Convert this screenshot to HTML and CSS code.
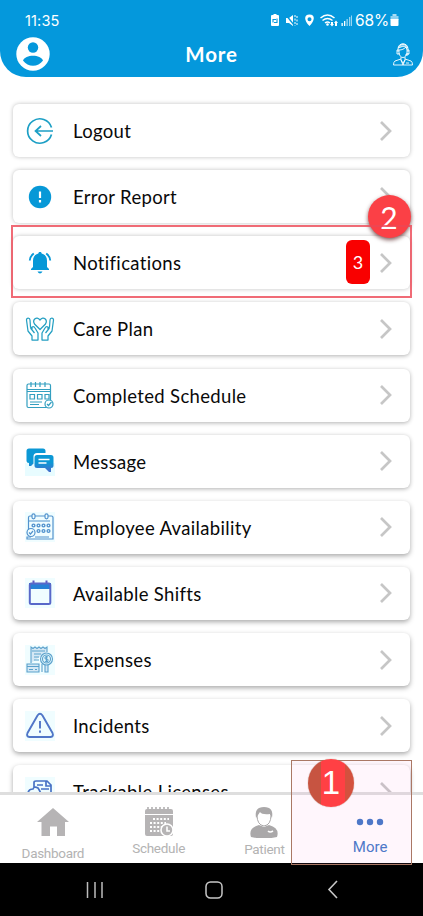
FILE: index.html
```html
<!DOCTYPE html>
<html lang="en">
<head>
<meta charset="utf-8">
<title>More</title>
<link rel="stylesheet" href="styles.css">
</head>
<body>
<svg class="defs" width="0" height="0"><defs>
<linearGradient id="blend" gradientUnits="userSpaceOnUse" x1="0" y1="0" x2="0" y2="30"><stop offset=".55" stop-color="#0c98d5"/><stop offset="1" stop-color="#625bc7"/></linearGradient>
<symbol id="chevron" viewBox="0 0 14 22"><path d="M2 2l9 9-9 9" fill="none" stroke="#c6c6c6" stroke-width="2.7"/></symbol>
</defs></svg>
<div class="screen">
<header class="header">
  <div class="status">
    <span class="time">11:35</span>
    <div class="status-icons">
      <svg width="85" height="16" viewBox="0 0 85 16" fill="#fff">
        <path d="M3 2h1.500V1h3v1H9q1 0 1 1v9q0 1-1 1H3q-1 0-1-1V3q0-1 1-1z"/><path d="M4 9.500V6.500h3M5 9.500h3V5.500" fill="none" stroke="#0498dc" stroke-width="1.100"/>
        <path d="M17 5h3l4-3v11l-4-3h-3z"/><path d="M17 2l8 10" stroke="#0498dc" stroke-width="1.300"/><path d="M26 2v11M28 3v10" stroke="#fff" stroke-dasharray="2 1.500"/>
        <path fill-rule="evenodd" d="M40.500 1.500c-6 0-5.500 6 0 11.500 5.500-5.500 6-11.500 0-11.500zm0 2.700a2 2 0 1 1 0 4 2 2 0 0 1 0-4z"/>
        <g fill="none" stroke="#fff" stroke-width="1.500"><path d="M51.500 5q7-6 14 0M53.500 7.500q5-4 10 0M56 10q2.500-2 5 0"/></g><circle cx="58.500" cy="11.500" r="1.300"/>
        <path d="M62 9h2v2h1l-2 2.500L61 11h1zM66 13v-3h-1l2-2.500L69 10h-1v3z"/>
        <path d="M72.500 10h1.300v3h-1.300zM75 8h1.300v5H75z"/><path opacity=".6" d="M77.500 6h1.300v7h-1.300zM80 4h1.300v9H80zM82 2.500h1v10.500h-1z"/>
      </svg>
      <span class="percent">68%</span>
      <svg width="9" height="13" viewBox="0 0 9 13"><path d="M2.500 0h4v2h-4z" fill="#a9dcf4"/><path d="M.500 2h8v4h-8z" fill="#8bd0f1"/><path d="M.500 5h8v6q0 1-1 1h-6q-1 0-1-1z" fill="#fff"/></svg>
    </div>
  </div>
  <div class="title-row">
    <svg width="34" height="34" viewBox="0 0 34 34"><circle cx="17" cy="17" r="16.700" fill="#fff"/><circle cx="17" cy="10.500" r="5.200" fill="#0498dc"/><path d="M7 23.500c2-6.500 18-6.500 20 0-5 7-15 7-20 0z" fill="#0498dc"/></svg>
    <h1>More</h1>
    <svg width="20" height="23" viewBox="0 0 20 23" fill="none" stroke="#fff" stroke-width=".9"><path d="M5 9V6c0-7 10-7 10 0v3M4 7h2v4H4zM14 7h2v4h-2zM6 7c3 0 5-1 7-3l1 3M6 10c1 6 7 6 8 0M12 12h3v-2M8 14v3l2 3 2-3v-3M8 16l-6 2q-1.500 1-1.500 4h19q0-3-1.500-4l-6-2M8 17l2 5 2-5M13 20h3"/><path d="M5.500 5c1-5 8-5 9 0-3-2-5-2-9 0z" fill="#fff" fill-opacity=".5"/></svg>
  </div>
</header>
<main class="list">
  <div class="card shade-1"><svg class="icon" viewBox="0 0 30 30" fill="none" stroke="#1c9fc5" stroke-width="1.700"><path d="M26.500 11.500A12.200 12.200 0 1 0 26.500 18.500M28 15H10.500M16 10l-5.500 5 5.500 5"/></svg><span class="label">Logout</span><svg class="chevron"><use href="#chevron"/></svg></div>
  <div class="card shade-1"><svg class="icon" viewBox="0 0 30 30"><circle cx="15" cy="15" r="11.200" fill="#0798d7"/><path d="M15 9.500v6.500M15 18v2.400" stroke="#fff" stroke-width="2.200"/></svg><span class="label">Error Report</span><svg class="chevron"><use href="#chevron"/></svg></div>
  <div class="card shade-1"><svg class="icon" viewBox="0 0 30 30" fill="#0798d7"><path d="M14 4h2l.700 1.500Q22 7 22 13v6l2 2v1H6v-1l2-2v-6q0-6 5.300-7.500zM12.500 23.500h5q-1 2-2.500 2t-2.500-2z"/><path d="M4.800 12.500q0-4 4-7M25.200 12.500q0-4-4-7" fill="none" stroke="#0798d7" stroke-width="1.900"/></svg><span class="label">Notifications</span><span class="count">3</span><svg class="chevron"><use href="#chevron"/></svg></div>
  <div class="card shade-2"><svg class="icon" viewBox="0 0 30 30" fill="none" stroke="#249fc2" stroke-width="1.250" stroke-linejoin="round"><path d="M15 15.500L9.500 10C7 6 11.500 1.500 15 6c3.500-4.500 8 0 5.500 4zM7 26v-4l-4-5L1.500 6q0-2 1.700-2t1.800 2l.500 7 1.500 2v-2q2-1 3 1l3 5v7zM23 26v-4l4-5 1.500-11q0-2-1.700-2T25 6l-.500 7-1.500 2v-2q-2-1-3 1l-3 5v7zM5.500 14l4 5M24.500 14l-4 5"/></svg><span class="label">Care Plan</span><svg class="chevron"><use href="#chevron"/></svg></div>
  <div class="card shade-2"><svg class="icon" viewBox="0 0 30 30" fill="none" stroke="#339fc0" stroke-width="1.200"><path d="M23 27.500H3.500q-1.500 0-1.500-1.500V5.500Q2 4 3.500 4H24q1.500 0 1.500 1.500V21M2 9.500h23.500M2 11.500h23.500M6 2v5M10.500 2v5M15 2v5M20 2v5M5 14.500h4.500V19H5zM12.500 14.500H17V19h-4.500zM20 14.500h4V19h-4zM5 22h12M5 24.500h9"/><circle cx="24" cy="24" r="4" fill="#fff"/><path d="M22 24l1.500 1.500L26.500 22"/></svg><span class="label">Completed Schedule</span><svg class="chevron"><use href="#chevron"/></svg></div>
  <div class="card shade-2"><svg class="icon tint-low" viewBox="0 0 30 30" fill="url(#blend)"><path d="M4 2.500h14q2.500 0 2.500 2.500v2H12q-3.500 0-3.500 3.500v7L6 20H4v-3q-2.500 0-2.500-2.500V5Q1.500 2.500 4 2.500z"/><path d="M12 9h14q2.500 0 2.500 2.500v8q0 2.500-2.500 2.500v4h-2l-4-4h-8q-2.500 0-2.500-2.500v-8Q9.500 9 12 9z"/><path d="M13.500 13.500h11M13.500 17h8" stroke="#fff" stroke-width="1.300"/></svg><span class="label">Message</span><svg class="chevron"><use href="#chevron"/></svg></div>
  <div class="card shade-3"><svg class="icon tint" viewBox="0 0 30 30" fill="none" stroke="#5393ce" stroke-width="1.200"><path d="M3.500 18V5.500Q3.500 4 5 4h2M10 4h10M23 4h3.500Q28 4 28 5.500V27H2v-2h4M3.500 9H25M10 25h14M28 20v3"/><rect x="7" y="1.800" width="3" height="5" rx="1.500"/><rect x="20" y="1.800" width="3" height="5" rx="1.500"/><g stroke-width="1.400"><circle cx="8.500" cy="13.500" r="1.400"/><circle cx="13.500" cy="13.500" r="1.400"/><circle cx="18.500" cy="13.500" r="1.400"/><circle cx="23.500" cy="13.500" r="1.400"/><circle cx="13.500" cy="19" r="1.400"/><circle cx="18.500" cy="19" r="1.400"/><circle cx="23.500" cy="19" r="1.400"/></g><circle cx="6" cy="20.500" r="4"/><path d="M4 20.500L5.500 22 8 19"/></svg><span class="label">Employee Availability</span><svg class="chevron"><use href="#chevron"/></svg></div>
  <div class="card shade-3"><svg class="icon tint" viewBox="0 0 30 30"><path d="M4 5h22v6H4z" fill="#277fd5"/><path d="M8.500 2.500v3M21.500 2.500v3" stroke="#625bc2" stroke-width="2"/><rect x="4.800" y="5.500" width="20.500" height="20.500" rx="1.500" fill="none" stroke="#5868c9" stroke-width="2"/></svg><span class="label">Available Shifts</span><svg class="chevron"><use href="#chevron"/></svg></div>
  <div class="card shade-3"><svg class="icon tint" viewBox="0 0 30 30" fill="none" stroke="#5ba1cc" stroke-width="1.100"><path d="M6 18V2l2 1.500L10 2l2 1.500L14 2l2 1.500L18 2l2 1.500L22 2v5M7 6h13M9 9h7M9 12h5M9 15h5M17 19v8M2 19h12v8H2zM2 21.500h12M4 24.500h4M10 24.500h2M20 20v7h3v-7" fill="#d5e8f5"/><circle cx="21.500" cy="14" r="6" fill="#e4f7fc"/><circle cx="21.500" cy="14" r="4"/><path d="M23 12q-3-1-3 .7t1.500 1.300 1.500 1.500-3 .8M21.500 11v6"/></svg><span class="label">Expenses</span><svg class="chevron"><use href="#chevron"/></svg></div>
  <div class="card shade-3"><svg class="icon tint" viewBox="0 0 30 30" fill="none" stroke="#5076c8" stroke-width="1.900"><path d="M12.500 4.500q2.500-3.500 5 0l10 17.500q1.500 3.500-2 4h-21q-3.500-.5-2-4z"/><path d="M15 10v7.500M15 19.500v2.300"/></svg><span class="label">Incidents</span><svg class="chevron"><use href="#chevron"/></svg></div>
  <div class="card shade-3"><svg class="icon tint" viewBox="0 0 30 30" fill="none" stroke="#4772c5" stroke-width="1.700"><path d="M9 10V5.500Q9 4 11 4h11l4 4v18H14M21 4v5h5M12 8h6M16 12h8M3 17q0-5 5-5 1-3 5-1 2 3 3 6"/></svg><span class="label">Trackable Licenses</span><svg class="chevron"><use href="#chevron"/></svg></div>
</main>
<nav class="tabs">
  <div class="tab dashboard"><svg width="32" height="28" viewBox="0 0 32 28" fill="#b6b4b5"><path d="M16 0l16 14h-4v14h-8v-9.500h-7V28H4.500V14H0z"/></svg><span>Dashboard</span></div>
  <div class="tab schedule"><svg width="30" height="30" viewBox="0 0 30 30"><path d="M1 8h28v19q0 2-2 2H3q-2 0-2-2zM1 7V4q0-2 2-2h24q2 0 2 2v3z" fill="#b6b4b5"/><path d="M4 0v4M8 0v4M12 0v4M16 0v4M20 0v4M24 0v4" stroke="#b6b4b5" stroke-width="1.700"/><path d="M9 12h16M6 16h16M6 20h12M6 24h10" stroke="#fff" stroke-width="1.800" stroke-dasharray="2 1.600"/><circle cx="23" cy="23" r="6" fill="#b6b4b5" stroke="#fff" stroke-width="1.600"/><path d="M23 19.500V24h3" fill="none" stroke="#fff" stroke-width="1.600"/></svg><span>Schedule</span></div>
  <div class="tab patient"><svg width="28" height="31" viewBox="0 0 28 31"><path d="M1 30q-3-9 8-12l5 2 5-2q11 3 8 12-13 3-26 0z" fill="#aaa8a9"/><path d="M7 8q0 10 7 11 7-1 7-11l-3-4H9z" fill="#fff" stroke="#aaa8a9"/><path d="M6 11Q4 0 14 0t8 11l-2-4q-8 1-10-2z" fill="#aaa8a9"/><path d="M18 24q2 2 5 0" stroke="#fff" stroke-width="1.600" fill="none"/></svg><span>Patient</span></div>
  <div class="tab more"><svg width="28" height="8" viewBox="0 0 28 8" fill="#4178c8"><circle cx="4" cy="4" r="3.200"/><circle cx="14" cy="4" r="3.200"/><circle cx="24" cy="4" r="3.200"/></svg><span>More</span></div>
</nav>
<footer class="system">
  <svg width="18" height="18" viewBox="0 0 18 18" stroke="#bcbcbc" stroke-width="1.500"><path d="M1.500 1v16M9 1v16M16 1v16"/></svg>
  <svg width="18" height="18" viewBox="0 0 18 18" fill="none" stroke="#c7c7c7" stroke-width="1.500"><rect x="1" y="1" width="16" height="16" rx="4.500"/></svg>
  <svg width="12" height="19" viewBox="0 0 12 19" fill="none" stroke="#c7c7c7" stroke-width="1.600"><path d="M10 1L2 9.500 10 18"/></svg>
</footer>
<div class="marker marker-2">2</div>
<div class="outline outline-2"></div>
<div class="outline outline-1"></div>
<div class="marker marker-1">1</div>
</div>
</body>
</html>
```
FILE: styles.css
```css
* { box-sizing: border-box; }
body { margin: 0; background: #fff; font-family: Lato, sans-serif; }
svg { display: block; flex: none; }
.defs { position: absolute; }
.screen { position: relative; width: 423px; height: 916px; overflow: hidden; display: flex; flex-direction: column; }
.header { flex: none; height: 77px; background: #0498dc; border-radius: 0 0 26px 26px; color: #fff; }
.status { height: 37px; padding: 4px 24px 0 25px; display: flex; align-items: center; justify-content: space-between; }
.time { font: 14.5px Inter, sans-serif; letter-spacing: .15px; }
.status-icons { display: flex; align-items: center; }
.percent { font: 15.5px Inter, sans-serif; margin: 0 1px 0 1px; width: 34px; letter-spacing: -.1px; }
.title-row { display: grid; grid-template-columns: 34px 1fr 20px; align-items: center; padding: 0 10px 0 16px; height: 34px; }
h1 { margin: 0; padding-right: 20px; text-align: center; font-size: 20.500px; font-weight: 700; letter-spacing: .8px; }
.list { flex: none; height: 715px; overflow: hidden; padding: 27px 13px 0; display: flex; flex-direction: column; gap: 13.150px; }
.card { flex: none; height: 53px; border-radius: 6px; background: #fff; padding: 0 17px 0 12px; display: flex; align-items: center; }
.shade-1 { box-shadow: 0 0 4px rgba(0,0,0,.25); }
.shade-2 { box-shadow: 0 1px 4px rgba(0,0,0,.31); }
.shade-3 { box-shadow: 0 2px 5px rgba(0,0,0,.34); }
.icon { width: 30px; height: 30px; }
.tint { background: #f0fdff; }
.tint-low { background: linear-gradient(#fff 55%, #e8fcff 55%); }
.label { flex: 1; margin-left: 18px; padding-top: 1px; font-size: 18.500px; letter-spacing: .33px; line-height: 24px; color: #090909; white-space: nowrap; }
.count { width: 24px; height: 44px; border-radius: 6px; background: #f90000; color: #fff; font-size: 18px; line-height: 45px; text-align: center; margin: -2px 9px 0 0; }
.chevron { width: 14px; height: 22px; }
.tabs { flex: none; height: 71px; border-top: 3px solid #dedede; background: #fff; display: grid; grid-template-columns: repeat(4, 1fr); }
.tab { display: flex; flex-direction: column; align-items: center; font: 13.500px/16px Roboto, sans-serif; letter-spacing: -.3px; color: #b3b3b3; }
.dashboard { padding-top: 13px; gap: 9px; }
.schedule { padding-top: 12px; gap: 3px; }
.patient { padding-top: 12px; gap: 3px; }
.more { padding-top: 23px; gap: 13px; color: #4178c8; font-size: 15px; letter-spacing: 0; }
.system { flex: none; height: 53px; background: #000; display: flex; align-items: center; justify-content: space-between; padding: 0 84px 0 86px; }
.system svg:nth-child(2) { margin-right: 3px; }
.marker { position: absolute; display: flex; align-items: center; justify-content: center; color: #fff; background: #fb4046; border-radius: 50%; }
.marker-2 { left: 367.500px; top: 195px; width: 43px; height: 43px; font-size: 30px; box-shadow: 0 2px 4px rgba(60,0,0,.65); }
.marker-1 { left: 308px; top: 758.500px; width: 46px; height: 48px; background: linear-gradient(90deg, #c75441 28%, #ff4044 28% 80%, #d4513e 80%); font: 33px "Liberation Sans", sans-serif; box-shadow: 0 0 1px #956046; }
.outline { position: absolute; }
.outline-2 { left: 11px; top: 225px; width: 401px; height: 73px; border: 2px solid rgba(236,70,84,.8); }
.outline-1 { left: 291px; top: 760px; width: 121px; height: 105px; border: 1px solid #aa7865; background: rgba(255,130,215,.07); }
```
